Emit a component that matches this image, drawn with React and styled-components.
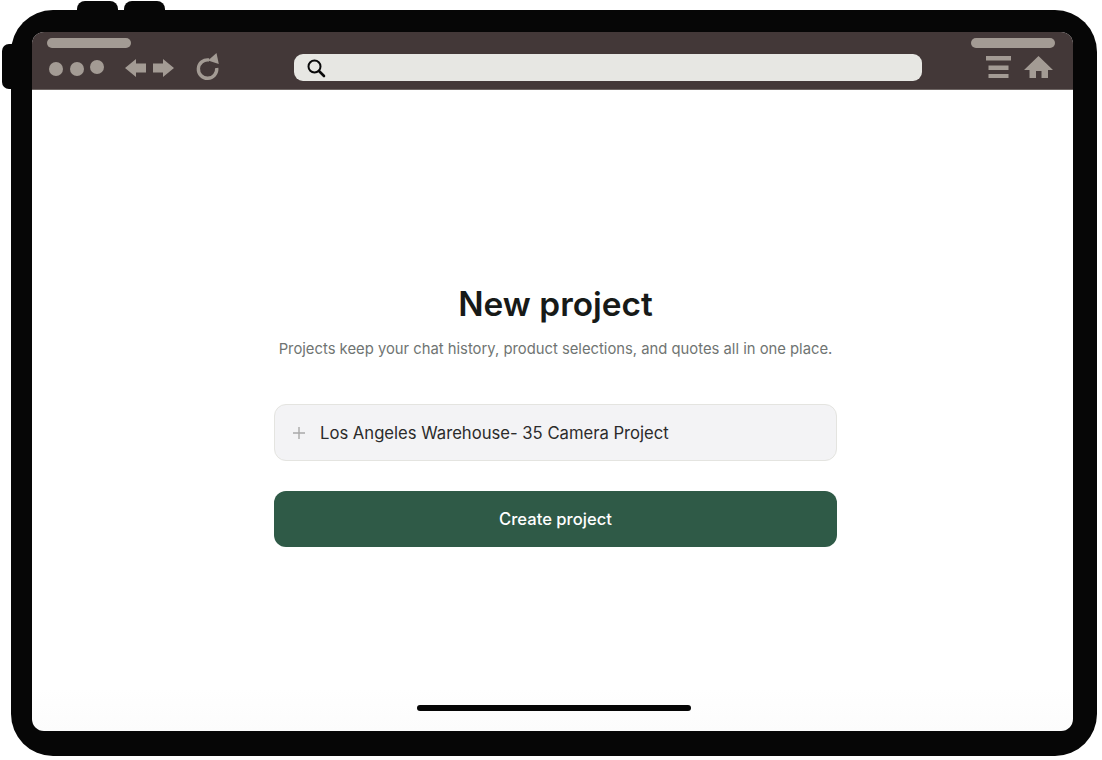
import styled, { createGlobalStyle } from "styled-components"

const GlobalStyle = createGlobalStyle`
  html, body {
    margin: 0;
    padding: 0;
    background: #fff;
  }
  * {
    box-sizing: border-box;
  }
`

const Stage = styled.div`
  width: 1102px;
  height: 760px;
  padding: 10px 5px 4px 11px;
  background: #fff;
  overflow: hidden;
  font-family: Inter, "Liberation Sans", sans-serif;
`

const Frame = styled.div`
  position: relative;
  width: 1086px;
  height: 746px;
  padding: 22px 24px 25px 21px;
  background: #060606;
  border-radius: 42px;
`

const TopButton = styled.div`
  position: absolute;
  top: -9px;
  left: ${(p) => p.$left}px;
  width: 41px;
  height: 12px;
  background: #060606;
  border-radius: 8px 8px 0 0;
`

const SideButton = styled.div`
  position: absolute;
  top: 34px;
  left: -9px;
  width: 12px;
  height: 45px;
  background: #060606;
  border-radius: 7px 0 0 7px;
`

const Screen = styled.div`
  height: 100%;
  display: flex;
  flex-direction: column;
  border-radius: 12px;
  overflow: hidden;
  background: linear-gradient(#fff 94%, #fcfcfc);
`

const Toolbar = styled.div`
  flex: none;
  height: 58px;
  display: flex;
  padding: 6px 18px 0 15px;
  background: #433838;
  border-bottom: 1px solid #6d6563;
`

const LeftTools = styled.div`
  flex: none;
  width: 247px;
`

const RightTools = styled.div`
  flex: none;
  width: 133px;
  display: flex;
  flex-direction: column;
  align-items: flex-end;
`

const Pill = styled.div`
  width: 84px;
  height: 10px;
  background: #a39b94;
  border-radius: 5px;
`

const NavRow = styled.div`
  display: flex;
  align-items: center;
  margin-top: 8px;
  margin-left: 2px;
`

const Dots = styled.div`
  display: flex;
  gap: 6.5px;
  margin-right: 21px;
`

const Dot = styled.span`
  width: 14px;
  height: 14px;
  border-radius: 50%;
  background: #a39b94;
  transform: translateY(${(p) => -(p.$up || 0)}px);
`

const ReloadSvg = styled.svg`
  margin-left: 21px;
  margin-top: -3px;
`

const SearchBar = styled.div`
  flex: none;
  width: 628px;
  height: 27px;
  margin-top: 16px;
  padding-left: 12px;
  display: flex;
  align-items: center;
  background: #e7e7e3;
  border-radius: 9px;
`

const RightIcons = styled.div`
  display: flex;
  align-items: center;
  gap: 13px;
  margin-top: 8px;
  padding-right: 2px;
`

const Content = styled.main`
  flex: 1;
  display: flex;
  flex-direction: column;
  align-items: center;
  padding: 194px 0 0 6px;
  color: #171a18;
`

const Title = styled.h1`
  margin: 0;
  font-size: 33.4px;
  line-height: 40px;
  font-weight: 600;
  letter-spacing: 0;
`

const Subtitle = styled.p`
  margin: 15px 0 0;
  font-size: 14.8px;
  line-height: 20px;
  color: #6f7472;
`

const NameField = styled.div`
  width: 563px;
  height: 57px;
  margin-top: 45px;
  padding: 0 17px;
  display: flex;
  align-items: center;
  gap: 14px;
  background: #f3f3f5;
  border: 1px solid #e4e4e0;
  border-radius: 12px;
  font-size: 16.65px;
  color: #2b2b2b;
`

const CreateButton = styled.button`
  width: 563px;
  height: 56px;
  margin-top: 30px;
  border: none;
  border-radius: 12px;
  background: #2f5a47;
  color: #fff;
  font-family: inherit;
  font-size: 16.6px;
  font-weight: 500;
  cursor: pointer;
`

const HomeBar = styled.div`
  flex: none;
  width: 274px;
  height: 6px;
  margin-top: auto;
  margin-bottom: 20px;
  margin-right: 3px;
  background: #060606;
  border-radius: 3px;
`

const ArrowsIcon = () => (
  <svg width="50" height="20" viewBox="0 0 50 20" fill="#a39b94">
    <path d="M0 9 L11 0 V4.5 H21 V13.5 H11 V18 Z" />
    <path d="M49 9 L38 0 V4.5 H28 V13.5 H38 V18 Z" />
  </svg>
)

const ReloadIcon = () => (
  <ReloadSvg width="24" height="28" viewBox="0 0 24 28">
    <path d="M13 7 A9.2 9.2 0 1 0 20.7 15" fill="none" stroke="#a39b94" strokeWidth="3.4" />
    <path d="M20.5 0 L22.8 11 L12 7.5 Z" fill="#a39b94" />
  </ReloadSvg>
)

const SearchIcon = () => (
  <svg width="20" height="20" viewBox="0 0 20 20" fill="none" stroke="#0a0a0a">
    <circle cx="8.5" cy="8.5" r="6" strokeWidth="2" />
    <path d="M13 13 L18 18" strokeWidth="2.6" strokeLinecap="round" />
  </svg>
)

const MenuIcon = () => (
  <svg width="25" height="22" viewBox="0 0 25 22" fill="#a39b94">
    <rect x="0" y="0" width="25" height="4.5" />
    <rect x="2.5" y="9.5" width="20" height="4.5" />
    <rect x="2.5" y="18" width="20" height="4" />
  </svg>
)

const HomeIcon = () => (
  <svg width="29" height="22" viewBox="0 0 29 22" fill="#a39b94">
    <path d="M14.5 0 L29 14 H24 V22 H17.5 V15 H12 V22 H5.5 V14 H0 Z" />
  </svg>
)

const PlusIcon = () => (
  <svg width="14" height="14" viewBox="0 0 14 14" stroke="#a9a9a9" strokeWidth="1.4">
    <path d="M7 1 V13 M1 7 H13" />
  </svg>
)

const App = () => {
  return (
    <Stage>
      <GlobalStyle />
      <Frame>
        <TopButton $left={66} />
        <TopButton $left={113} />
        <SideButton />
        <Screen>
          <Toolbar>
            <LeftTools>
              <Pill />
              <NavRow>
                <Dots>
                  <Dot />
                  <Dot />
                  <Dot $up={2} />
                </Dots>
                <ArrowsIcon />
                <ReloadIcon />
              </NavRow>
            </LeftTools>
            <SearchBar>
              <SearchIcon />
            </SearchBar>
            <RightTools>
              <Pill />
              <RightIcons>
                <MenuIcon />
                <HomeIcon />
              </RightIcons>
            </RightTools>
          </Toolbar>
          <Content>
            <Title>New project</Title>
            <Subtitle>Projects keep your chat history, product selections, and quotes all in one place.</Subtitle>
            <NameField>
              <PlusIcon />
              Los Angeles Warehouse- 35 Camera Project
            </NameField>
            <CreateButton>Create project</CreateButton>
            <HomeBar />
          </Content>
        </Screen>
      </Frame>
    </Stage>
  )
}

export default App
